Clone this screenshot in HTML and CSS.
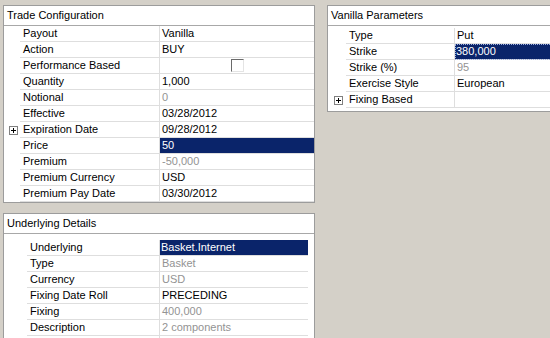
FILE: index.html
```html
<!DOCTYPE html>
<html>
<head>
<meta charset="utf-8">
<title>Trade Configuration</title>
<link rel="stylesheet" href="styles.css">
</head>
<body>
<div class="screen">
  <div class="col-left">
    <section class="panel trade">
      <div class="panel-title">Trade Configuration</div>
      <div class="grid">
        <div class="row"><span class="gut"></span><span class="lbl">Payout</span><span class="val">Vanilla</span></div>
        <div class="row"><span class="gut"></span><span class="lbl">Action</span><span class="val">BUY</span></div>
        <div class="row"><span class="gut"></span><span class="lbl">Performance Based</span><span class="val center"><span class="check"></span></span></div>
        <div class="row"><span class="gut"></span><span class="lbl">Quantity</span><span class="val">1,000</span></div>
        <div class="row"><span class="gut"></span><span class="lbl">Notional</span><span class="val dim">0</span></div>
        <div class="row"><span class="gut"></span><span class="lbl">Effective</span><span class="val">03/28/2012</span></div>
        <div class="row"><span class="gut"><svg class="plus" width="9" height="9" viewBox="0 0 9 9"><rect x="0.5" y="0.5" width="8" height="8" fill="#fff" stroke="#808080"/><path d="M2 4.5h5M4.5 2v5" stroke="#000"/></svg></span><span class="lbl">Expiration Date</span><span class="val">09/28/2012</span></div>
        <div class="row"><span class="gut"></span><span class="lbl">Price</span><span class="val sel">50</span></div>
        <div class="row"><span class="gut"></span><span class="lbl">Premium</span><span class="val dim">-50,000</span></div>
        <div class="row"><span class="gut"></span><span class="lbl">Premium Currency</span><span class="val">USD</span></div>
        <div class="row"><span class="gut"></span><span class="lbl">Premium Pay Date</span><span class="val">03/30/2012</span></div>
      </div>
    </section>
    <section class="panel underlying">
      <div class="panel-title">Underlying Details</div>
      <div class="grid">
        <div class="row"><span class="gut"></span><span class="lbl">Underlying</span><span class="val sel">Basket.Internet</span></div>
        <div class="row"><span class="gut"></span><span class="lbl">Type</span><span class="val dim">Basket</span></div>
        <div class="row"><span class="gut"></span><span class="lbl">Currency</span><span class="val dim">USD</span></div>
        <div class="row"><span class="gut"></span><span class="lbl">Fixing Date Roll</span><span class="val">PRECEDING</span></div>
        <div class="row"><span class="gut"></span><span class="lbl">Fixing</span><span class="val dim">400,000</span></div>
        <div class="row"><span class="gut"></span><span class="lbl">Description</span><span class="val dim">2 components</span></div>
        <div class="row"><span class="gut"></span><span class="lbl"></span><span class="val"></span></div>
      </div>
    </section>
  </div>
  <section class="panel vanilla">
    <div class="panel-title">Vanilla Parameters</div>
    <div class="grid">
      <div class="row"><span class="gut"></span><span class="lbl">Type</span><span class="val">Put</span></div>
      <div class="row"><span class="gut"></span><span class="lbl">Strike</span><span class="val sel focus">380,000</span></div>
      <div class="row"><span class="gut"></span><span class="lbl">Strike (%)</span><span class="val dim">95</span></div>
      <div class="row"><span class="gut"></span><span class="lbl">Exercise Style</span><span class="val">European</span></div>
      <div class="row"><span class="gut"><svg class="plus" width="9" height="9" viewBox="0 0 9 9"><rect x="0.5" y="0.5" width="8" height="8" fill="#fff" stroke="#808080"/><path d="M2 4.5h5M4.5 2v5" stroke="#000"/></svg></span><span class="lbl">Fixing Based</span><span class="val"></span></div>
    </div>
  </section>
</div>
</body>
</html>
```

FILE: styles.css
```css
body {
  margin: 0;
  height: 338px;
  overflow: hidden;
  background: #d4d0c8;
  font-family: "Liberation Sans", Arial, sans-serif;
  font-size: 11px;
  color: #000;
}

.screen {
  display: flex;
  align-items: flex-start;
  gap: 12px;
  padding: 5px 0 0 3px;
}

.col-left {
  display: flex;
  flex-direction: column;
  gap: 10px;
  width: 312px;
  flex: none;
}

.panel {
  background: #fff;
  border: 1px solid #9c9c9c;
  box-sizing: border-box;
}

.panel-title {
  height: 19px;
  line-height: 19px;
  padding-left: 3px;
  border-bottom: 1px solid #a8a8a8;
}

.row {
  display: grid;
  height: 16px;
  line-height: 15px;
}

.gut {
  display: flex;
  align-items: center;
}

.lbl, .val {
  border-bottom: 1px solid #dedede;
  white-space: nowrap;
  overflow: hidden;
}

.lbl {
  padding-left: 3px;
  border-right: 1px solid #dedede;
}

.val { padding-left: 2px; }
.val.center {
  display: flex;
  justify-content: center;
  align-items: center;
  padding-left: 0;
}
.dim { color: #939393; }
.sel {
  background: #0a246a;
  color: #fff;
  padding-left: 2px;
}
.focus {
  outline: 1px dotted #9fb0e0;
  outline-offset: -1px;
  padding-left: 1px;
}

.check {
  width: 11px;
  height: 11px;
  border: 1px solid;
  border-color: #6a6a6a #e4e4e4 #e4e4e4 #6a6a6a;
  background: #fff;
}

/* trade configuration */
.trade { width: 312px; }
.trade .row { grid-template-columns: 16px 140px 1fr; }
.trade .gut { padding-left: 5px; }

/* underlying details */
.underlying { width: 312px; height: 140px; }
.underlying .grid { padding: 6px 6px 0 6px; }
.underlying .row { grid-template-columns: 17px 133px 1fr; }
.underlying .sel { padding-left: 1px; }

/* vanilla parameters */
.vanilla { width: 240px; flex: none; padding-bottom: 3px; }
.vanilla .grid { padding-top: 2px; }
.vanilla .row { grid-template-columns: 18px 109px 1fr; }
.vanilla .gut { padding-left: 6px; }
```
